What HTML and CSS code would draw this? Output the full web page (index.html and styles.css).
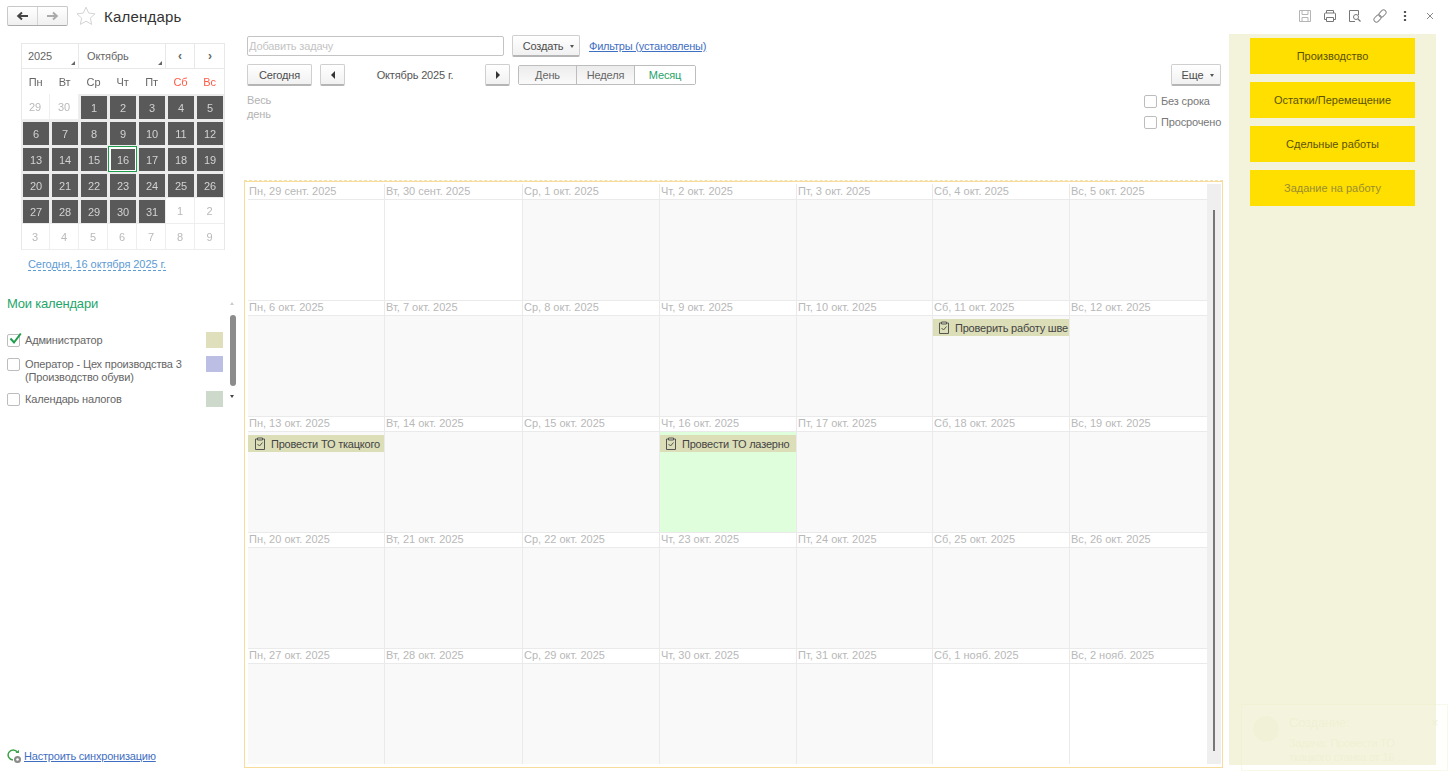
FILE: index.html
```html
<!DOCTYPE html>
<html lang="ru">
<head>
    <meta charset="UTF-8">
    <title>Календарь</title>
    <link rel="stylesheet" href="styles.css">
</head>
<body>
    <header class="topbar">
        <div class="nav-group">
            <button class="nav-btn"><svg width="13" height="10" viewBox="0 0 13 10"><path d="M12 5H3M6 1.500 2.200 5 6 8.500" fill="none" stroke="#444" stroke-width="2"/></svg></button>
            <button class="nav-btn"><svg width="13" height="10" viewBox="0 0 13 10"><path d="M1 5h9M7 1.500 10.800 5 7 8.500" fill="none" stroke="#aaa" stroke-width="2"/></svg></button>
        </div>
        <svg class="star" width="20" height="20" viewBox="0 0 20 20"><path d="M10 1.200l2.700 5.900 6.400.7-4.800 4.300 1.400 6.300-5.700-3.200-5.700 3.200 1.400-6.300L.9 7.800l6.400-.7z" fill="none" stroke="#d4d4d4"/></svg>
        <h1 class="page-title">Календарь</h1>
        <div class="top-tools">
            <svg width="14" height="14" viewBox="0 0 14 14"><path d="M1.500 1.500h11v11h-11zM4 1.500v4h6v-4M4 12.500v-4h6v4" fill="none" stroke="#b5b5b5"/></svg>
            <svg width="14" height="14" viewBox="0 0 14 14"><path d="M3.500 4V1.500h7V4M3.500 10.500h-2v-5.500a1 1 0 0 1 1-1h9a1 1 0 0 1 1 1v5.500h-2M3.500 8.500h7v4h-7z" fill="none" stroke="#777"/></svg>
            <svg width="14" height="14" viewBox="0 0 14 14"><path d="M7 12.500H1.500v-11h9V6" fill="none" stroke="#777"/><circle cx="8" cy="8" r="2.500" fill="none" stroke="#777"/><path d="M10 10l2.500 2.500" stroke="#777" stroke-width="1.300"/></svg>
            <svg width="14" height="14" viewBox="0 0 14 14"><g transform="rotate(-45 7 7)" fill="none" stroke="#888"><rect x="-.5" y="4.500" width="8" height="5" rx="2.500"/><rect x="6.500" y="4.500" width="8" height="5" rx="2.500"/></g></svg>
            <svg width="14" height="14" viewBox="0 0 14 14"><path d="M7 2v2M7 6v2M7 10v2" stroke="#555" stroke-width="2.200"/></svg>
            <svg width="14" height="14" viewBox="0 0 14 14"><path d="M4 4l6 6M10 4l-6 6" stroke="#888"/></svg>
        </div>
    </header>

    <div class="main">
        <aside class="sidebar">
            <div class="mini-cal">
                <div class="mini-head">
                    <div class="mini-select mini-year">2025</div>
                    <div class="mini-select mini-month">Октябрь</div>
                    <div class="mini-arrow">‹</div>
                    <div class="mini-arrow">›</div>
                </div>
                <div class="mini-grid">
                    <div class="wd">Пн</div><div class="wd">Вт</div><div class="wd">Ср</div><div class="wd">Чт</div><div class="wd">Пт</div><div class="wd wd-red">Сб</div><div class="wd wd-red">Вс</div>
                    <div class="day">29</div><div class="day">30</div><div class="day on">1</div><div class="day on">2</div><div class="day on">3</div><div class="day on">4</div><div class="day on">5</div>
                    <div class="day on">6</div><div class="day on">7</div><div class="day on">8</div><div class="day on">9</div><div class="day on">10</div><div class="day on">11</div><div class="day on">12</div>
                    <div class="day on">13</div><div class="day on">14</div><div class="day on">15</div><div class="day on today">16</div><div class="day on">17</div><div class="day on">18</div><div class="day on">19</div>
                    <div class="day on">20</div><div class="day on">21</div><div class="day on">22</div><div class="day on">23</div><div class="day on">24</div><div class="day on">25</div><div class="day on">26</div>
                    <div class="day on">27</div><div class="day on">28</div><div class="day on">29</div><div class="day on">30</div><div class="day on">31</div><div class="day">1</div><div class="day">2</div>
                    <div class="day">3</div><div class="day">4</div><div class="day">5</div><div class="day">6</div><div class="day">7</div><div class="day">8</div><div class="day">9</div>
                </div>
            </div>
            <a class="today-link">Сегодня, 16 октября 2025 г.</a>

            <div class="my-cals">
                <h2 class="my-title">Мои календари</h2>
                <div class="cal-row cal-row-first">
                    <span class="check checked"><svg width="15" height="14" viewBox="0 0 15 14"><path d="M2.500 6.500l3.500 4L12.800 1.500" fill="none" stroke="#1f9d4d" stroke-width="2"/></svg></span>
                    <span class="cal-name">Администратор</span>
                    <span class="swatch swatch-a"></span>
                </div>
                <div class="cal-row cal-row-two">
                    <span class="check"></span>
                    <span class="cal-name">Оператор - Цех производства 3 (Производство обуви)</span>
                    <span class="swatch swatch-b"></span>
                </div>
                <div class="cal-row">
                    <span class="check"></span>
                    <span class="cal-name">Календарь налогов</span>
                    <span class="swatch swatch-c"></span>
                </div>
                <div class="side-scroll"></div>
                <div class="scroll-up"></div>
                <div class="scroll-down"></div>
            </div>

            <div class="sync">
                <svg width="15" height="15" viewBox="0 0 15 15"><path d="M10.500 3.500A5 5 0 1 0 6 11" fill="none" stroke="#3fa34d" stroke-width="1.500"/><path d="M8.500 4h3.500V.8z" fill="#3fa34d"/><circle cx="10.500" cy="10.500" r="3.500" fill="#8a8a8a"/><circle cx="10.500" cy="10.500" r="1.300" fill="#fff"/></svg>
                <a class="sync-link">Настроить синхронизацию</a>
            </div>
        </aside>

        <section class="center">
            <div class="row-task">
                <div class="task-input">Добавить задачу</div>
                <button class="btn btn-create">Создать <i class="caret"></i></button>
                <a class="filters">Фильтры (установлены)</a>
            </div>
            <div class="row-period">
                <button class="btn btn-today">Сегодня</button>
                <button class="btn btn-arrow"><i class="tri-left"></i></button>
                <div class="period-label">Октябрь 2025 г.</div>
                <button class="btn btn-arrow"><i class="tri-right"></i></button>
                <div class="views">
                    <div class="view view-day">День</div>
                    <div class="view view-week">Неделя</div>
                    <div class="view view-active">Месяц</div>
                </div>
                <button class="btn btn-more">Еще <i class="caret"></i></button>
            </div>
            <div class="row-allday">
                <div class="allday">Весь<br>день</div>
                <div class="flags">
                    <label class="flag"><span class="check"></span>Без срока</label>
                    <label class="flag"><span class="check"></span>Просрочено</label>
                </div>
            </div>

            <div class="board">
                <div class="weeks" id="weeks"></div>
                <div class="board-scroll"><div class="board-thumb"></div></div>
            </div>
        </section>

        <aside class="actions">
            <div class="action">Производство</div>
            <div class="action">Остатки/Перемещение</div>
            <div class="action">Сдельные работы</div>
            <div class="action action-off">Задание на работу</div>
        </aside>
    </div>

    <div class="toast">
        <div class="toast-icon"></div>
        <div class="toast-text">
            <div class="toast-title">Создание:</div>
            <div>Задача: Провести ТО<br>ткацкого станка от 16 ...</div>
        </div>
        <div class="toast-close">×</div>
    </div>

    <script src="calendar.js"></script>
</body>
</html>
```

FILE: calendar.js
```js
// Month grid: five weeks starting Mon 29 Sep 2025
const names = ['Пн', 'Вт', 'Ср', 'Чт', 'Пт', 'Сб', 'Вс'];
const months = ['сент.', 'окт.', 'нояб.'];
const lens = [30, 31, 30];
const events = {
    '1-11': 'Проверить работу шве',
    '1-13': 'Провести ТО ткацкого',
    '1-16': 'Провести ТО лазерно'
};
const weeks = document.getElementById('weeks');

let m = 0;
let d = 29;
for (let w = 0; w < 5; w++) {
    const row = document.createElement('div');
    row.className = 'week';
    for (let i = 0; i < 7; i++) {
        const key = m + '-' + d;
        const cell = document.createElement('div');
        cell.className = 'cell';
        if (m === 1) cell.classList.add('cell-month');
        if (key === '1-16') cell.classList.add('cell-today');

        const head = document.createElement('div');
        head.className = 'cell-head';
        head.textContent = `${names[i]}, ${d} ${months[m]} 2025`;
        cell.appendChild(head);

        if (events[key]) {
            const ev = document.createElement('div');
            ev.className = 'event';
            ev.innerHTML = '<svg width="12" height="13" viewBox="0 0 12 13"><path d="M3.500 2H1.500v10.500h9V2H8.500M3.500 1h5v2h-5zM3.500 7l2 2 3-3.500" fill="none" stroke="#555"/></svg>';
            const label = document.createElement('span');
            label.textContent = events[key];
            ev.appendChild(label);
            cell.appendChild(ev);
        }
        row.appendChild(cell);

        d++;
        if (d > lens[m]) {
            d = 1;
            m++;
        }
    }
    weeks.appendChild(row);
}
```

FILE: styles.css
```css
* {
    box-sizing: border-box;
}

html, body {
    height: 100%;
}

body {
    margin: 0;
    background: #fff;
    font-family: "Liberation Sans", Arial, sans-serif;
    font-size: 11px;
    letter-spacing: -0.15px;
    color: #4d4d4d;
    overflow: hidden;
    position: relative;
}

a {
    cursor: pointer;
}

/* Top bar */
.topbar {
    height: 34px;
    display: flex;
    align-items: center;
    padding: 0 11px 2px 7px;
}

.nav-group {
    display: flex;
    width: 61px;
    height: 20px;
    border: 1px solid #c8c8c8;
    border-bottom-color: #aaa;
    border-radius: 2px;
    background: linear-gradient(#fff, #f0f0f0);
}

.nav-btn {
    flex: 1;
    padding: 0;
    border: none;
    background: none;
    display: flex;
    align-items: center;
    justify-content: center;
}

.nav-btn + .nav-btn {
    border-left: 1px solid #d5d5d5;
}

.star {
    margin-left: 8px;
}

.page-title {
    margin: 0 0 0 8px;
    font-size: 15px;
    font-weight: normal;
    color: #333;
    letter-spacing: 0.2px;
}

.top-tools {
    margin-left: auto;
    display: flex;
    align-items: center;
    gap: 11px;
}

/* Page columns */
.main {
    height: 737px;
    display: flex;
}

.sidebar {
    width: 244px;
    flex: none;
    display: flex;
    flex-direction: column;
    padding: 9px 0 0 7px;
}

/* Mini calendar */
.mini-cal {
    width: 204px;
    height: 207px;
    margin-left: 14px;
    box-shadow: inset 0 0 0 1px #e8e8e8;
}

.mini-head {
    display: flex;
    height: 26px;
    border-bottom: 1px solid #e8e8e8;
}

.mini-select {
    position: relative;
    display: flex;
    align-items: center;
    padding-left: 7px;
    color: #666;
    border-right: 1px solid #e8e8e8;
}

.mini-select::after {
    content: "";
    position: absolute;
    right: 3px;
    bottom: 3px;
    border-left: 4px solid transparent;
    border-bottom: 4px solid #666;
}

.mini-year {
    width: 58px;
}

.mini-month {
    width: 87px;
    padding-left: 8px;
}

.mini-arrow {
    width: 29px;
    display: flex;
    align-items: center;
    justify-content: center;
    font-size: 12px;
    font-weight: bold;
    color: #666;
    border-right: 1px solid #e8e8e8;
}

.mini-arrow:last-child {
    width: 30px;
    border-right: none;
}

.mini-grid {
    display: grid;
    grid-template-columns: repeat(7, 29px);
    grid-template-rows: 25px;
    grid-auto-rows: 26px;
    will-change: opacity;
}

.wd {
    display: flex;
    align-items: center;
    justify-content: center;
    color: #666;
}

.wd-red {
    color: #ff5a46;
}

.day {
    display: flex;
    align-items: center;
    justify-content: center;
    color: #b9b9b9;
    letter-spacing: 0;
    border: solid #eeeeee;
    border-width: 0 1px 1px 0;
}

.day:nth-child(7n) {
    border-right: none;
}

.day.on {
    padding: 2px 1px 1px 2px;
    border: none;
    background: linear-gradient(#595959, #595959) content-box, #ececec;
    color: #d2d2d2;
}

.day.today {
    background: linear-gradient(#595959, #595959) content-box, #fff;
    padding: 3px 2px 2px 3px;
    outline: 1px solid #1f9d4d;
    outline-offset: -1px;
}

.today-link {
    align-self: flex-start;
    margin: 8px 0 0 21px;
    color: #5d9bd3;
    border-bottom: 1px dashed #5d9bd3;
    letter-spacing: -0.08px;
}

/* My calendars */
.my-cals {
    position: relative;
    margin-top: 25px;
    width: 231px;
    flex: 1;
}

.my-title {
    margin: 0 0 21px;
    font-size: 13px;
    letter-spacing: -0.2px;
    font-weight: normal;
    color: #1fa66b;
}

.cal-row {
    display: flex;
    align-items: flex-start;
    width: 216px;
    min-height: 16px;
}

.cal-row-first {
    margin-bottom: 8px;
}

.cal-row-two {
    margin-bottom: 7px;
}

.check {
    width: 13px;
    height: 13px;
    flex: none;
    position: relative;
    display: inline-block;
    border: 1px solid #bdbdbd;
    border-radius: 2px;
    background: #fff;
    margin-top: 2px;
}

.check svg {
    position: absolute;
    left: 0;
    top: -3px;
}

.cal-name {
    flex: 1;
    margin-left: 5px;
    line-height: 13px;
    color: #666;
    padding-top: 2px;
}

.swatch {
    width: 17px;
    height: 16px;
    flex: none;
}

.swatch-a { background: #dfe0bb; }
.swatch-b { background: #bcbfe3; }
.swatch-c { background: #cddacb; }

.side-scroll {
    position: absolute;
    right: 2px;
    top: 19px;
    width: 6px;
    height: 71px;
    border-radius: 3px;
    background: #8c8c8c;
}

.scroll-up,
.scroll-down {
    position: absolute;
    right: 4px;
    border-left: 2.500px solid transparent;
    border-right: 2.500px solid transparent;
}

.scroll-up {
    top: 6px;
    border-bottom: 3px solid #ccc;
}

.scroll-down {
    top: 99px;
    border-top: 3px solid #444;
}

.sync {
    display: flex;
    align-items: center;
    gap: 2px;
    height: 18px;
    margin-bottom: 6px;
}

.sync-link {
    color: #3f6fc2;
    text-decoration: underline;
    letter-spacing: -0.2px;
}

/* Center column */
.center {
    width: 985px;
    flex: none;
    display: flex;
    flex-direction: column;
}

.row-task {
    display: flex;
    align-items: center;
    height: 22px;
    margin: 1px 0 0 3px;
}

.task-input {
    width: 257px;
    height: 20px;
    padding: 3px 1px;
    border: 1px solid #c4c4c4;
    border-radius: 2px;
    color: #c4c4c4;
}

.btn {
    height: 22px;
    padding: 0;
    border: 1px solid #cfcfcf;
    border-bottom: 2px solid #b5b5b5;
    border-radius: 2px;
    background: linear-gradient(#fff, #f1f1f1);
    font-family: inherit;
    font-size: 11px;
    letter-spacing: inherit;
    color: #4d4d4d;
}

.btn-create {
    width: 68px;
    margin-left: 8px;
    padding-left: 5px;
}

.filters {
    margin-left: 9px;
    color: #3f6fc2;
    text-decoration: underline;
    letter-spacing: -0.2px;
}

.caret {
    display: inline-block;
    vertical-align: middle;
    margin-left: 4px;
    border-left: 2.500px solid transparent;
    border-right: 2.500px solid transparent;
    border-top: 3px solid #555;
}

.row-period {
    display: flex;
    align-items: center;
    height: 22px;
    margin: 7px 0 0 3px;
}

.btn-today {
    width: 65px;
}

.btn-arrow {
    width: 25px;
    display: flex;
    align-items: center;
    justify-content: center;
}

.btn-today + .btn-arrow {
    margin-left: 8px;
}

.tri-left,
.tri-right {
    border-top: 4px solid transparent;
    border-bottom: 4px solid transparent;
}

.tri-left {
    border-right: 4px solid #333;
}

.tri-right {
    border-left: 4px solid #333;
}

.period-label {
    width: 140px;
    text-align: center;
    color: #555;
}

.views {
    display: flex;
    height: 20px;
    margin-left: 8px;
    border: 1px solid #bdbdbd;
    border-radius: 2px;
}

.view {
    display: flex;
    align-items: center;
    justify-content: center;
    border-left: 1px solid #bdbdbd;
}

.view-day {
    width: 57px;
    border-left: none;
    background: linear-gradient(#ececec, #fafafa);
    color: #666;
}

.view-week {
    width: 58px;
    background: linear-gradient(#ececec, #fafafa);
    color: #666;
}

.view-active {
    width: 61px;
    background: #fff;
    color: #26a269;
}

.btn-more {
    width: 50px;
    margin-left: auto;
    margin-right: 8px;
    padding-left: 4px;
}

.row-allday {
    height: 94px;
    display: flex;
    justify-content: space-between;
    padding: 7px 8px 0 3px;
}

.allday {
    line-height: 14px;
    color: #b3b3b3;
}

.flags {
    display: flex;
    flex-direction: column;
    gap: 7px;
    width: 77px;
    margin-top: 1px;
}

.flag {
    display: flex;
    align-items: center;
    gap: 4px;
    height: 14px;
    color: #777;
    white-space: nowrap;
}

.flag .check {
    margin-top: 0;
}

/* Month board */
.board {
    height: 588px;
    width: 979px;
    display: flex;
    padding: 3px 1px 3px 3px;
    border: 1px solid #f8dc9c;
    border-top: 1px dashed #f2e2b0;
    box-shadow: inset 0 1px 0 #f8dc9c;
}

.weeks {
    flex: none;
    width: 959px;
    display: flex;
    flex-direction: column;
}

.week {
    flex: 1;
    display: grid;
    grid-template-columns: 136px 138px 137px 137px 136px 137px minmax(0, 1fr);
}

.cell {
    display: flex;
    flex-direction: column;
    background: #fff;
    border-left: 1px solid #eaeaea;
}

.cell:first-child {
    border-left: none;
}

.cell-month {
    background: #f9f9f9;
}

.cell-today {
    background: #dfffdc;
}

.cell-head {
    height: 16px;
    padding-left: 1px;
    background: #fff;
    border-top: 1px solid #eaeaea;
    border-bottom: 1px solid #eaeaea;
    color: #b8b8b8;
    white-space: nowrap;
    overflow: hidden;
    letter-spacing: 0;
}

.week:first-child .cell-head {
    border-top-color: transparent;
}

.event {
    display: flex;
    align-items: center;
    gap: 5px;
    height: 17px;
    margin-top: 3px;
    padding-left: 5px;
    background: #dcdeb8;
    color: #444;
    letter-spacing: -0.2px;
    white-space: nowrap;
    overflow: hidden;
}

.cell:first-child .event {
    padding-left: 6px;
}

.event svg {
    flex: none;
}

.board-scroll {
    flex: 1;
    position: relative;
    background: #efefef;
}

.board-thumb {
    position: absolute;
    left: 6px;
    top: 26px;
    bottom: 13px;
    width: 2px;
    background: #777;
}

/* Right actions */
.actions {
    width: 207px;
    height: 731px;
    flex: none;
    display: flex;
    flex-direction: column;
    gap: 8px;
    padding: 4px 21px 0;
    background: #f3f3dc;
}

.action {
    height: 36px;
    display: flex;
    align-items: center;
    justify-content: center;
    background: #ffdf00;
    color: #5b5200;
    letter-spacing: 0;
}

.action-off {
    color: #9a8d30;
}

/* Fading notification */
.toast {
    position: absolute;
    left: 1241px;
    top: 704px;
    width: 207px;
    height: 67px;
    display: flex;
    gap: 10px;
    padding: 11px 0 0 11px;
    border: 1px solid rgba(235, 235, 200, 0.35);
    background: rgba(255, 255, 240, 0.12);
    color: #f0f0d4;
    line-height: 14px;
    letter-spacing: -0.2px;
}

.toast-icon {
    width: 26px;
    height: 26px;
    border-radius: 50%;
    background: #f1f1d7;
}

.toast-title {
    font-size: 13px;
    margin-bottom: 6px;
}

.toast-close {
    position: absolute;
    right: 9px;
    top: 11px;
    font-size: 12px;
}
```
